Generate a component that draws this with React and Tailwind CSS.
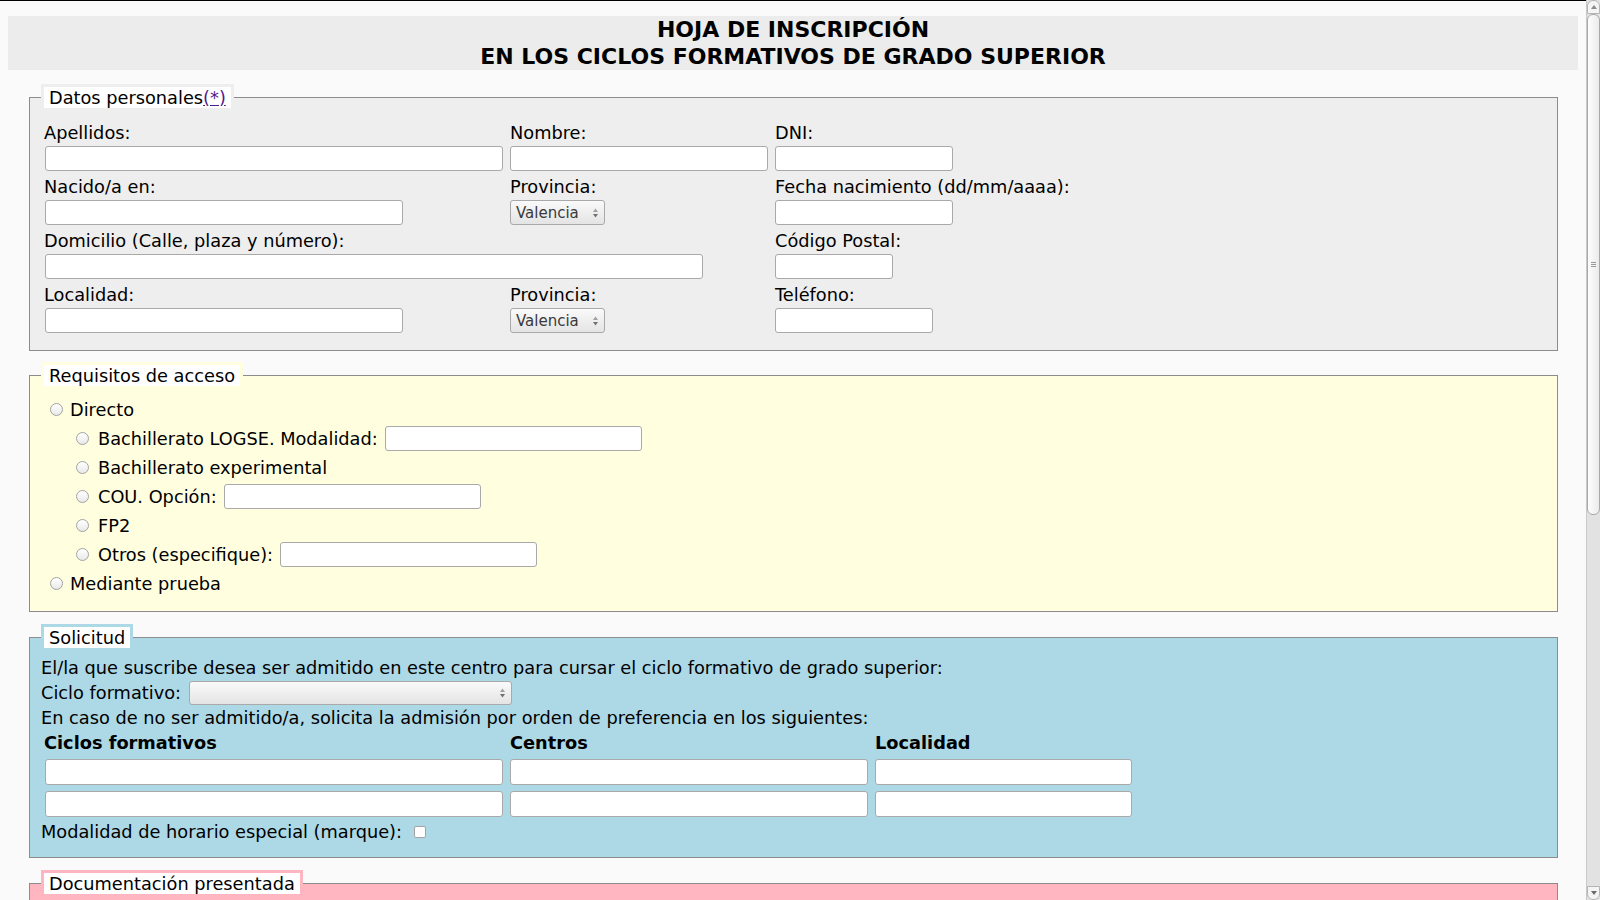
import React from "react";

const inputBase =
  "block h-[25px] bg-white border border-[#a9a9a9] rounded-[3px] shrink-0";

function Arrows() {
  return (
    <svg width="7" height="12" viewBox="0 0 7 12" className="shrink-0">
      <path d="M3.5 1.5 L6 5 L1 5 Z" fill="#a0a0a0" />
      <path d="M3.5 10.5 L6 7 L1 7 Z" fill="#707070" />
    </svg>
  );
}

function SelectBox({ cls, text }) {
  return (
    <div
      className={`flex items-center justify-between rounded-[3px] border border-[#a9a9a9] bg-linear-to-b from-[#fafafa] to-[#e4e4e4] pl-[5px] pr-[5px] shrink-0 ${cls}`}
    >
      <span className="text-[15px] leading-[16px] text-[#3a3a3a]">{text}</span>
      <Arrows />
    </div>
  );
}

function Radio({ cls }) {
  return (
    <span
      className={`inline-block h-[13px] w-[13px] shrink-0 rounded-full border border-[#a3a3a3] bg-linear-to-b from-white to-[#e9e9e9] ${cls}`}
    />
  );
}

function Cell({ label, children, span }) {
  return (
    <div className={`h-[54px] ${span ? "col-span-2" : ""}`}>
      <div className="h-[28px] pt-[2px] leading-[27px]">{label}</div>
      {children}
    </div>
  );
}

function Scrollbar() {
  return (
    <div className="flex h-full w-[14px] shrink-0 flex-col border-l border-[#c9c9c9] bg-[#e2e2e2]">
      <div className="flex h-[14px] items-center justify-center rounded-t-[6px] border border-[#b5b5b5] bg-[#f4f4f4]">
        <svg width="6" height="4" viewBox="0 0 6 4">
          <path d="M3 0 L6 4 L0 4 Z" fill="#8a8a8a" />
        </svg>
      </div>
      <div className="flex h-[501px] items-center justify-center rounded-[6px] border border-[#a9a9a9] bg-linear-to-r from-[#fdfdfd] to-[#ebebeb]">
        <div className="flex flex-col gap-[1px]">
          <div className="h-[1px] w-[5px] bg-[#9a9a9a]" />
          <div className="h-[1px] w-[5px] bg-[#9a9a9a]" />
          <div className="h-[1px] w-[5px] bg-[#9a9a9a]" />
        </div>
      </div>
      <div className="flex-1" />
      <div className="flex h-[14px] items-center justify-center rounded-b-[6px] border border-[#b5b5b5] bg-[#f4f4f4]">
        <svg width="6" height="4" viewBox="0 0 6 4">
          <path d="M0 0 L6 0 L3 4 Z" fill="#6a6a6a" />
        </svg>
      </div>
    </div>
  );
}

const legendCls =
  "border-[3px] bg-white px-[5px] pt-[2px] text-[17.75px] leading-[19px]";

export default function App() {
  return (
    <div className="flex h-screen w-full overflow-hidden bg-[#fafafa] font-['DejaVu_Sans',sans-serif] text-black">
      <div className="min-w-0 flex-1 overflow-hidden border-t border-black">
        <div className="px-[8px] pt-[15px]">
          <h1 className="bg-[#ececec] text-center text-[22px] font-bold leading-[27px]">
            HOJA DE INSCRIPCIÓN
            <br />
            EN LOS CICLOS FORMATIVOS DE GRADO SUPERIOR
          </h1>

          <form className="ml-[21px] mr-[20px] text-[17.75px]">
            {/* Datos personales */}
            <fieldset className="mt-[14px] border border-[#8c8c8c] bg-[#eeeeee] px-[11px] pt-[7px] pb-[16px]">
              <legend className={`${legendCls} border-[#eeeeee]`}>
                Datos personales
                <a href="#" className="text-[#551a8b] underline">
                  (*)
                </a>
              </legend>
              <div className="ml-[3px] grid grid-cols-[466px_265px_1fr]">
                <Cell label="Apellidos:">
                  <input type="text" className={`${inputBase} ml-[1px] w-[458px]`} />
                </Cell>
                <Cell label="Nombre:">
                  <input type="text" className={`${inputBase} w-[258px]`} />
                </Cell>
                <Cell label="DNI:">
                  <input type="text" className={`${inputBase} w-[178px]`} />
                </Cell>

                <Cell label="Nacido/a en:">
                  <input type="text" className={`${inputBase} ml-[1px] w-[358px]`} />
                </Cell>
                <Cell label="Provincia:">
                  <SelectBox cls="h-[25px] w-[95px]" text="Valencia" />
                </Cell>
                <Cell label="Fecha nacimiento (dd/mm/aaaa):">
                  <input type="text" className={`${inputBase} w-[178px]`} />
                </Cell>

                <Cell label="Domicilio (Calle, plaza y número):" span>
                  <input type="text" className={`${inputBase} ml-[1px] w-[658px]`} />
                </Cell>
                <Cell label="Código Postal:">
                  <input type="text" className={`${inputBase} w-[118px]`} />
                </Cell>

                <Cell label="Localidad:">
                  <input type="text" className={`${inputBase} ml-[1px] w-[358px]`} />
                </Cell>
                <Cell label="Provincia:">
                  <SelectBox cls="h-[25px] w-[95px]" text="Valencia" />
                </Cell>
                <Cell label="Teléfono:">
                  <input type="text" className={`${inputBase} w-[158px]`} />
                </Cell>
              </div>
            </fieldset>

            {/* Requisitos de acceso */}
            <fieldset className="mt-[11px] border border-[#8c8c8c] bg-[#ffffe0] px-[11px] pt-[6px] pb-[13px]">
              <legend className={`${legendCls} border-[#ffffe0]`}>
                Requisitos de acceso
              </legend>
              <div className="flex h-[29px] items-center">
                <Radio cls="ml-[9px] mr-[7px]" />
                <span className="mt-[2px]">Directo</span>
              </div>
              <div className="flex h-[29px] items-center">
                <Radio cls="ml-[35px] mr-[9px]" />
                <span className="mt-[2px]">Bachillerato LOGSE. Modalidad:</span>
                <input type="text" className={`${inputBase} ml-[7px] w-[257px]`} />
              </div>
              <div className="flex h-[29px] items-center">
                <Radio cls="ml-[35px] mr-[9px]" />
                <span className="mt-[2px]">Bachillerato experimental</span>
              </div>
              <div className="flex h-[29px] items-center">
                <Radio cls="ml-[35px] mr-[9px]" />
                <span className="mt-[2px]">COU. Opción:</span>
                <input type="text" className={`${inputBase} ml-[7px] w-[257px]`} />
              </div>
              <div className="flex h-[29px] items-center">
                <Radio cls="ml-[35px] mr-[9px]" />
                <span className="mt-[2px]">FP2</span>
              </div>
              <div className="flex h-[29px] items-center">
                <Radio cls="ml-[35px] mr-[9px]" />
                <span className="mt-[2px]">Otros (especifique):</span>
                <input type="text" className={`${inputBase} ml-[7px] w-[257px]`} />
              </div>
              <div className="flex h-[29px] items-center">
                <Radio cls="ml-[9px] mr-[7px]" />
                <span className="mt-[2px]">Mediante prueba</span>
              </div>
            </fieldset>

            {/* Solicitud */}
            <fieldset className="mt-[12px] border border-[#8c8c8c] bg-[#add8e6] px-[11px] pt-[4px] pb-[13px]">
              <legend className={`${legendCls} border-[#add8e6]`}>
                Solicitud
              </legend>
              <div className="h-[25px] pt-[1px] leading-[25px]">
                El/la que suscribe desea ser admitido en este centro para cursar el ciclo formativo de grado superior:
              </div>
              <div className="flex h-[25px] items-center">
                <span className="mt-[2px]">Ciclo formativo:</span>
                <SelectBox cls="ml-[8px] h-[24px] w-[323px]" text="" />
              </div>
              <div className="h-[25px] pt-[1px] leading-[25px]">
                En caso de no ser admitido/a, solicita la admisión por orden de preferencia en los siguientes:
              </div>
              <div className="ml-[3px] grid h-[25px] grid-cols-[466px_365px_1fr] pt-[1px] font-bold leading-[25px]">
                <div>Ciclos formativos</div>
                <div>Centros</div>
                <div>Localidad</div>
              </div>
              <div className="ml-[3px] mt-[4px] grid grid-cols-[466px_365px_1fr]">
                <input type="text" className={`${inputBase} ml-[1px] h-[26px] w-[458px]`} />
                <input type="text" className={`${inputBase} h-[26px] w-[358px]`} />
                <input type="text" className={`${inputBase} h-[26px] w-[257px]`} />
              </div>
              <div className="ml-[3px] mt-[6px] grid grid-cols-[466px_365px_1fr]">
                <input type="text" className={`${inputBase} ml-[1px] h-[26px] w-[458px]`} />
                <input type="text" className={`${inputBase} h-[26px] w-[358px]`} />
                <input type="text" className={`${inputBase} h-[26px] w-[257px]`} />
              </div>
              <div className="mt-[2px] flex h-[25px] items-center">
                <span className="mt-[2px]">Modalidad de horario especial (marque):</span>
                <span className="ml-[12px] inline-block h-[12px] w-[12px] rounded-[2px] border border-[#a3a3a3] bg-white" />
              </div>
            </fieldset>

            {/* Documentación presentada */}
            <fieldset className="mt-[12px] border border-[#8c8c8c] bg-[#ffb6c1] px-[11px] pt-[6px] pb-[13px]">
              <legend className={`${legendCls} border-[#ffb6c1]`}>
                Documentación presentada
              </legend>
              <div className="h-[200px]" />
            </fieldset>
          </form>
        </div>
      </div>
      <Scrollbar />
    </div>
  );
}
